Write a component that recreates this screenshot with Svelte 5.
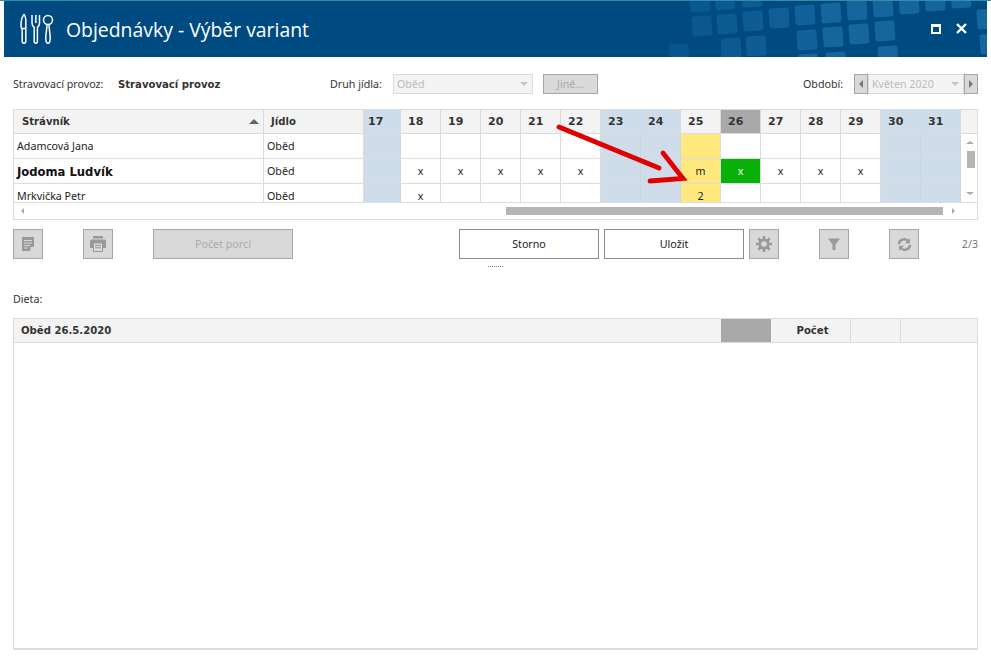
<script>
  const days = [17, 18, 19, 20, 21, 22, 23, 24, 25, 26, 27, 28, 29, 30, 31];
  const weekend = [17, 23, 24, 30, 31];

  const rows = [
    { name: 'Adamcová Jana', food: 'Oběd', marks: {} },
    { name: 'Jodoma Ludvík', food: 'Oběd', big: true, marks: { 18: 'x', 19: 'x', 20: 'x', 21: 'x', 22: 'x', 25: 'm', 26: 'x', 27: 'x', 28: 'x', 29: 'x' } },
    { name: 'Mrkvička Petr', food: 'Oběd', marks: { 18: 'x', 25: '2' } }
  ];

  // lighter tiles in the title bar
  const tiles = [
    [35, 15, 0.5], [60, 13, 0.6], [86, 10, 0.7], [112, 7, 0.8], [138, 4, 0.9], [164, 2, 1], [190, -1, 1], [216, -4, 1], [242, -7, 1], [268, -10, 1], [294, -13, 1], [320, 8, 1],
    [64, 37, 0.6], [89, 35, 0.7], [140, 29, 0.9], [166, 26, 1], [192, 23, 1], [218, 20, 1], [323, 33, 1],
    [33, -9, 0.5], [58, -11, 0.6], [85, -14, 0.7],
    [12, 43, 0.4], [141, 53, 1], [169, 51, 1], [221, 45, 1]
  ];
</script>

<div class="page">
  <header class="titlebar">
    <svg class="tiles" width="330" height="56" viewBox="0 0 330 56" aria-hidden="true">
      {#each tiles as t}
        <rect x={t[0]} y={t[1]} width="20" height="20" rx="2.5" fill="#1b6ba3" opacity={t[2] * 0.8} transform="rotate(-4 {t[0] + 10} {t[1] + 10})" />
      {/each}
    </svg>
    <svg class="logo" width="34" height="32" viewBox="0 0 34 32" fill="none" stroke="#fff" stroke-width="1.5" aria-hidden="true">
      <path d="M4 1.500c-2 2-3 6-3 11 0 2 .5 3.500 1.200 4.500V28c0 1.400.7 2.300 1.800 2.300s1.800-.9 1.800-2.300V6.500C5.800 4 5 2.500 4 1.500z" />
      <path d="M1.400 15.500h4.400" />
      <path d="M12 2v8c0 2.300 1 3.500 2.200 4.300V28c0 1.400.6 2.300 1.600 2.300s1.600-.9 1.600-2.300V14.300C18.600 13.500 19.500 12.300 19.500 10V2M15.800 2v8" />
      <circle cx="28" cy="7" r="4.500" />
      <path d="M27 11.500C27 16 25.800 20 25.800 25c0 3.300 1 5.300 2.200 5.300s2.200-2 2.200-5.300c0-5-1.200-9-1.200-13.500" />
    </svg>
    <h1>Objednávky - Výběr variant</h1>
    <div class="winbtns">
      <span class="maxbtn"></span>
      <svg width="11" height="11" viewBox="0 0 11 11" stroke="#fff" stroke-width="2.400" aria-hidden="true"><path d="M1 1l9 9M10 1l-9 9" /></svg>
    </div>
  </header>

  <main>
    <div class="filters">
      <span class="lbl provoz-lbl">Stravovací provoz:</span>
      <b class="provoz">Stravovací provoz</b>
      <span class="lbl druh-lbl">Druh jídla:</span>
      <div class="select druh"><span>Oběd</span><i class="caret"></i></div>
      <button class="jine" disabled>Jiné...</button>
      <span class="lbl obdobi-lbl">Období:</span>
      <button class="nav" disabled><i class="tri left"></i></button>
      <div class="select mesic"><span>Květen 2020</span><i class="caret"></i></div>
      <button class="nav" disabled><i class="tri right"></i></button>
    </div>

    <div class="grid">
      <div class="row head">
        <div class="cell c-name"><b>Strávník</b><i class="sort"></i></div>
        <div class="cell c-food"><b>Jídlo</b></div>
        {#each days as d, i}
          <div class="cell day" class:first={i === 0} class:weekend={weekend.includes(d)} class:current={d === 26}><b>{d}</b></div>
        {/each}
        <div class="filler"></div>
      </div>

      <div class="body">
        <div class="rows">
          {#each rows as r}
            <div class="row">
              <div class="cell c-name name" class:big={r.big}>{r.name}</div>
              <div class="cell c-food">{r.food}</div>
              {#each days as d, i}
                <div
                  class="cell day"
                  class:first={i === 0}
                  class:weekend={weekend.includes(d)}
                  class:today={d === 25}
                  class:picked={d === 26 && r.marks[d]}
                >{r.marks[d] ?? ''}</div>
              {/each}
            </div>
          {/each}
        </div>
        <div class="vscroll">
          <i class="tri up"></i>
          <div class="vtrack"><div class="vthumb"></div></div>
          <i class="tri down"></i>
        </div>
      </div>

      <div class="hscroll">
        <i class="tri left small"></i>
        <div class="htrack"><div class="hthumb"></div></div>
        <i class="tri right small"></i>
      </div>

      <svg class="arrow" width="150" height="70" viewBox="0 0 150 70" fill="none" stroke="#e00000" stroke-width="4.800" stroke-linecap="round" aria-hidden="true">
        <path d="M3 4L103 45" />
        <path d="M94 58L127 55.500L107 30" />
      </svg>
    </div>

    <div class="toolbar">
      <button class="icon" disabled aria-label="Poznámka">
        <svg width="14" height="14" viewBox="0 0 14 14" fill="#999"><path d="M1 0h12v9L8.500 14H1z" /><path d="M3 3h8v1H3zM3 5.500h8v1H3zM3 8h6v1H3zM3 10.500h4v1H3z" fill="#d9d9d9" /><path d="M9.500 10H13l-3.500 4z" fill="#d9d9d9" /></svg>
      </button>
      <button class="icon print" disabled aria-label="Tisk">
        <svg width="18" height="16" viewBox="0 0 18 16" fill="#999"><path d="M4 0h10v2.500H4z" /><path d="M2.500 3.500h13A1.500 1.500 0 0 1 17 5v7h-3v4H4v-4H1V5a1.500 1.500 0 0 1 1.500-1.500z" /><path d="M5 7.500h8V15H5z" fill="#d9d9d9" /><path d="M6 9h6v1H6zM6 11.200h6v1H6z" /></svg>
      </button>
      <button class="wide porce" disabled>Počet porcí</button>
      <button class="wide action storno">Storno</button>
      <button class="wide action">Uložit</button>
      <button class="icon gear" disabled aria-label="Nastavení">
        <svg width="18" height="18" viewBox="0 0 18 18" fill="none" stroke="#999"><circle cx="9" cy="9" r="4.200" stroke-width="2.800" /><path d="M9 1v3.500M9 13.500V17M1 9h3.500M13.500 9H17M3.300 3.300l2.500 2.500M12.200 12.200l2.500 2.500M14.700 3.300l-2.500 2.500M5.800 12.200l-2.500 2.500" stroke-width="2.600" /></svg>
      </button>
      <button class="icon filter" disabled aria-label="Filtr">
        <svg width="14" height="14" viewBox="0 0 14 14" fill="#999"><path d="M1 1.500h12L8.500 7.500V13h-3V7.500z" /></svg>
      </button>
      <button class="icon reload" disabled aria-label="Obnovit">
        <svg width="17" height="15" viewBox="0 0 20 18" fill="none" stroke="#999" stroke-width="2.800"><path d="M3.200 8.500A6.500 6.500 0 0 1 15 5.500" /><path d="M16.800 9.500A6.500 6.500 0 0 1 5 12.500" /><path d="M16.500 1.500v6h-6z" fill="#999" stroke="none" /><path d="M3.500 16.500v-6h6z" fill="#999" stroke="none" /></svg>
      </button>
      <span class="pages">2/3</span>
    </div>

    <div class="grip"></div>

    <div class="dieta">Dieta:</div>

    <div class="detail">
      <div class="detail-head">
        <b class="d-title">Oběd 26.5.2020</b>
        <div class="d-gray"></div>
        <b class="d-count">Počet</b>
        <div class="d-empty"></div>
        <div class="d-last"></div>
      </div>
    </div>
  </main>
</div>

<style>
  :global(body) {
    margin: 0;
    background: #fff;
  }

  .page {
    width: 991px;
    height: 658px;
    overflow: hidden;
    font-family: "Noto Sans", sans-serif;
    font-size: 10.7px;
    color: #333;
    border-top: 1px solid #2f8fa8;
    box-sizing: border-box;
  }

  b {
    font-family: "DejaVu Sans", sans-serif;
    font-size: 10.1px;
    font-weight: 700;
    color: #333;
  }

  .titlebar {
    position: relative;
    display: flex;
    align-items: center;
    height: 56px;
    margin: 0 4px;
    padding-left: 16px;
    background: #004a82;
    overflow: hidden;
  }

  .tiles {
    position: absolute;
    right: 0;
    top: 0;
  }

  .logo {
    position: relative;
    flex: none;
  }

  h1 {
    position: relative;
    margin: 0 0 0 12px;
    font-family: "Open Sans", sans-serif;
    font-size: 19.4px;
    font-weight: 400;
    color: #fff;
  }

  .winbtns {
    position: relative;
    display: flex;
    align-items: center;
    gap: 15px;
    margin-left: auto;
    margin-right: 20px;
    padding-bottom: 1px;
  }

  .maxbtn {
    box-sizing: border-box;
    width: 10px;
    height: 10px;
    border: 2px solid #fff;
    border-top-width: 3px;
  }

  main {
    padding: 0 13px;
  }

  .filters {
    display: flex;
    align-items: center;
    height: 20px;
    margin-top: 17px;
  }

  .provoz-lbl { width: 105px; }
  .provoz { width: 212px; }
  .druh-lbl { width: 63px; }

  .select {
    box-sizing: border-box;
    display: flex;
    align-items: center;
    justify-content: space-between;
    height: 20px;
    padding: 0 4px 0 3px;
    background: #f4f4f4;
    border: 1px solid #dcdcdc;
    color: #bbb;
  }

  .druh { width: 140px; }
  .mesic { width: 96px; }

  .caret {
    width: 0;
    height: 0;
    border: 4px solid transparent;
    border-top: 4px solid #c4c4c4;
    border-bottom: 0;
  }

  .jine {
    width: 55px;
    height: 20px;
    margin: 0 205px 0 10px;
  }

  .obdobi-lbl { width: 51px; }

  button {
    box-sizing: border-box;
    display: flex;
    align-items: center;
    justify-content: center;
    padding: 0;
    background: #d9d9d9;
    border: 1px solid #a6a6a6;
    border-radius: 0;
    font: inherit;
    color: #aaa;
  }

  .nav {
    width: 14px;
    height: 20px;
  }

  .tri {
    display: block;
    width: 0;
    height: 0;
    border: 4px solid transparent;
  }

  .tri.left { border-left: 0; border-right: 4px solid #777; }
  .tri.right { border-right: 0; border-left: 4px solid #777; }
  .tri.up { border-top: 0; border-bottom: 3px solid #aaa; border-width: 0 4px 3px; }
  .tri.down { border-bottom: 0; border-top: 3px solid #aaa; border-width: 3px 4px 0; }
  .tri.small { border-width: 3px; }
  .tri.small.left { border-left: 0; border-right-color: #aaa; }
  .tri.small.right { border-right: 0; border-left-color: #aaa; }

  .grid {
    position: relative;
    box-sizing: border-box;
    height: 111px;
    margin-top: 15px;
    border: 1px solid #dcdcdc;
    color: #222;
  }

  .row {
    display: flex;
    height: 24px;
    border-bottom: 1px solid #dcdcdc;
  }

  .cell {
    box-sizing: border-box;
    display: flex;
    align-items: center;
    flex: none;
    height: 100%;
    border-right: 1px solid #dcdcdc;
  }

  .c-name {
    width: 250px;
    padding-left: 3px;
  }

  .c-food {
    width: 100px;
    padding-left: 3px;
  }

  .day {
    width: 40px;
    justify-content: center;
    padding-left: 0;
  }

  .day.first {
    width: 37px;
  }

  .weekend {
    background: #cfdce9;
    border-right-color: #c9d6e4;
  }

  .today {
    background: #ffe97f;
  }

  .picked {
    background: #08b108;
    color: #fff;
  }

  .name.big {
    font-family: "DejaVu Sans", sans-serif;
    font-size: 11.6px;
    font-weight: 700;
    color: #111;
    padding-top: 2px;
  }

  .head {
    height: 23px;
    background: #f3f3f3;
  }

  .head .c-name {
    justify-content: space-between;
    padding: 0 4px 0 8px;
  }

  .head .c-food {
    padding-left: 7px;
  }

  .head .day {
    justify-content: flex-start;
    padding-left: 7px;
  }

  .head .day b {
    font-size: 11px;
  }

  .head .day.first {
    padding-left: 4px;
  }

  .head .day.weekend {
    background: #cfdce9;
    border-right-color: #cfdce9;
  }

  .head .day.current {
    background: #a9a9a9;
  }

  .filler {
    flex: 1;
  }

  .sort {
    width: 0;
    height: 0;
    margin-right: 0;
    border: solid transparent;
    border-width: 0 5px 5px;
    border-bottom-color: #666;
  }

  .body {
    display: flex;
    height: 68px;
    border-bottom: 1px solid #dcdcdc;
  }

  .rows {
    width: 947px;
    height: 68px;
    overflow: hidden;
  }

  .vscroll {
    flex: 1;
    display: flex;
    flex-direction: column;
    align-items: center;
    padding: 7px 0 7px;
    box-sizing: border-box;
    border-left: 1px solid transparent;
  }

  .vtrack {
    flex: 1;
    align-self: stretch;
    padding-top: 7px;
  }

  .vthumb {
    width: 8px;
    height: 17px;
    margin-left: 5px;
    background: #b5b5b5;
  }

  .hscroll {
    display: flex;
    align-items: center;
    height: 16px;
    padding: 0 22px 0 7px;
  }

  .htrack {
    flex: 1;
    height: 8px;
    padding: 0 5px;
  }

  .hthumb {
    width: 437px;
    height: 8px;
    margin-left: 477px;
    background: #b5b5b5;
  }

  .arrow {
    position: absolute;
    left: 542px;
    top: 13px;
  }

  .toolbar {
    display: flex;
    align-items: center;
    margin-top: 9px;
  }

  .icon {
    flex: none;
    width: 30px;
    height: 30px;
  }

  .print { margin-left: 40px; }
  .porce { margin-left: 40px; }
  .gear { margin-left: 5px; }
  .filter { margin-left: 40px; }
  .reload { margin-left: 40px; }

  .wide {
    flex: none;
    width: 140px;
    height: 30px;
  }

  .action {
    background: #fff;
    border-color: #8c8c8c;
    color: #222;
    margin-left: 5px;
  }

  .storno {
    margin-left: 166px;
  }

  .pages {
    margin-left: auto;
    color: #777;
  }

  .grip {
    width: 15px;
    margin: 7px auto 0;
    border-top: 1px dotted #777;
  }

  .dieta {
    margin-top: 25px;
    line-height: 15px;
  }

  .detail {
    box-sizing: border-box;
    height: 332px;
    margin-top: 11px;
    border: 1px solid #dcdcdc;
    border-bottom-width: 2px;
  }

  .detail-head {
    display: flex;
    align-items: center;
    height: 23px;
    background: #f3f3f3;
    border-bottom: 1px solid #dcdcdc;
  }

  .d-title {
    width: 707px;
    padding-left: 7px;
    box-sizing: border-box;
  }

  .d-gray {
    width: 50px;
    height: 100%;
    background: #a9a9a9;
  }

  .d-count {
    box-sizing: border-box;
    width: 80px;
    padding-left: 4px;
    text-align: center;
    border-right: 1px solid #dcdcdc;
    line-height: 23px;
  }

  .d-empty {
    box-sizing: border-box;
    width: 50px;
    height: 100%;
    border-right: 1px solid #dcdcdc;
  }

  .d-last {
    flex: 1;
  }
</style>
